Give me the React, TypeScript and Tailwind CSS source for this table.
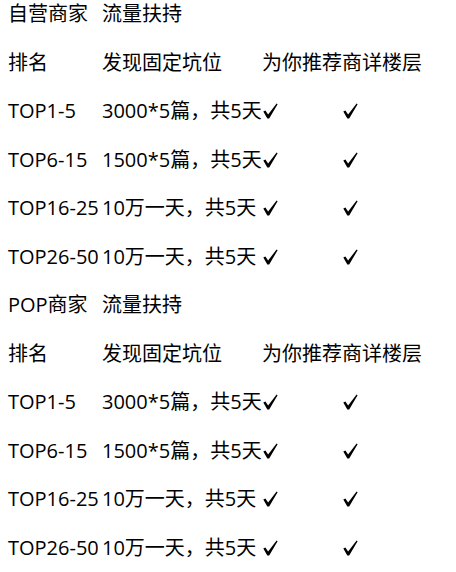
const groups = [
  { title: '自营商家' },
  { title: 'POP商家' },
];

const rows = [
  { rank: 'TOP1-5', slot: '3000*5篇，共5天' },
  { rank: 'TOP6-15', slot: '1500*5篇，共5天' },
  { rank: 'TOP16-25', slot: '10万一天，共5天' },
  { rank: 'TOP26-50', slot: '10万一天，共5天' },
];

const rowCls = 'grid grid-cols-[94px_160px_80px_1fr] h-[28px] leading-[28px] mb-[20.5px] whitespace-nowrap';

function Check() {
  return (
    <span className="flex h-full items-center pl-px">
      <svg width="15" height="16" viewBox="0 0 15 16" className="block">
        <path d="M0.3 8.6 L2.4 7.6 L5.1 11.6 L13.6 0.4 L14.6 1.2 L6.2 15.6 L4.3 15.6 Z" fill="#000" />
      </svg>
    </span>
  );
}

export default function App() {
  return (
    <div
      className="min-h-screen bg-white text-black text-[20px] px-2"
      style={{ fontFamily: '"Open Sans", "Noto Sans CJK SC", sans-serif' }}
    >
      {groups.map((g) => (
        <div key={g.title}>
          {/* group title */}
          <div className={rowCls}>
            <div>{g.title}</div>
            <div>流量扶持</div>
          </div>

          {/* header */}
          <div className={rowCls}>
            <div>排名</div>
            <div>发现固定坑位</div>
            <div className="col-span-2">为你推荐商详楼层</div>
          </div>

          {rows.map((r) => (
            <div key={r.rank} className={rowCls}>
              <div>{r.rank}</div>
              <div>{r.slot}</div>
              <Check />
              <Check />
            </div>
          ))}
        </div>
      ))}
    </div>
  );
}
